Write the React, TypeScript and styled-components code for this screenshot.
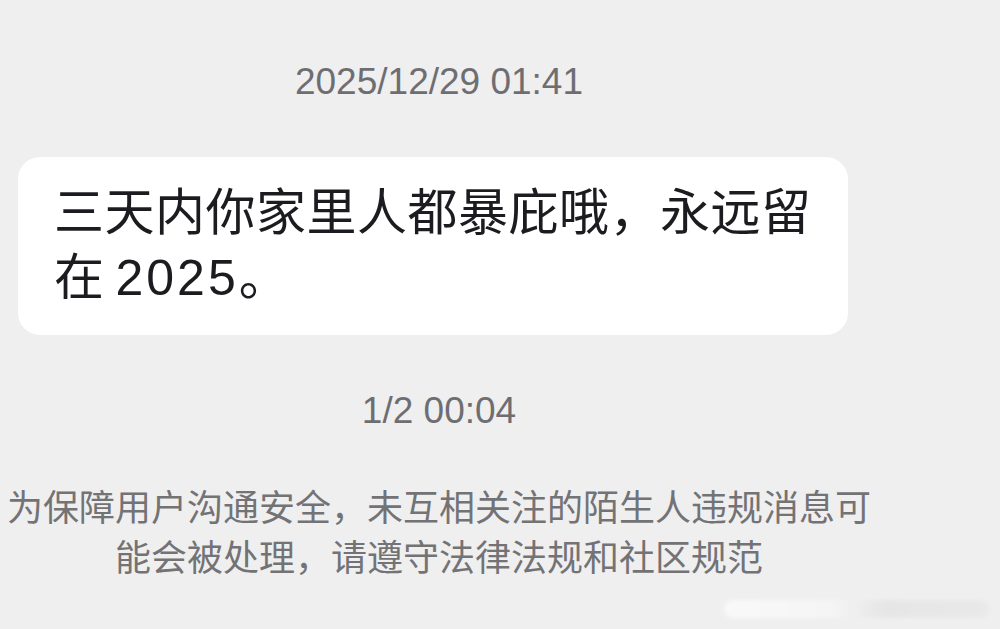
import React from 'react';
import styled, { createGlobalStyle } from 'styled-components';

const GlobalStyle = createGlobalStyle`
    html, body {
        margin: 0;
        padding: 0;
        background: #efefef;
    }
    body {
        font-family: "Liberation Sans", "Noto Sans CJK SC", sans-serif;
    }
`;

const Page = styled.div`
    position: relative;
    width: 1000px;
    height: 629px;
    overflow: hidden;
    background: #efefef;
`;

const Column = styled.div`
    width: 878px;
    padding-top: 60px;
    display: flex;
    flex-direction: column;
    align-items: center;
`;

const Timestamp = styled.div<{ $gap: number }>`
    font-family: "Liberation Sans", "Noto Sans CJK SC", sans-serif;
    font-size: 37px;
    line-height: 44px;
    color: #6e6e72;
    margin-bottom: ${({ $gap }) => $gap}px;
`;

const Bubble = styled.div`
    align-self: flex-start;
    margin-left: 18px;
    width: 830px;
    box-sizing: border-box;
    padding: 19px 30px 29px 36px;
    background: #ffffff;
    border-radius: 22px;
    font-family: "Noto Sans CJK SC", "Liberation Sans", sans-serif;
    font-size: 50px;
    line-height: 65px;
    letter-spacing: 0.5px;
    color: #1c1c20;
    margin-bottom: 54px;
`;

// latin run inside CJK text, a bit wider like the phone font
const Latin = styled.span`
    font-family: "Liberation Sans", sans-serif;
    line-height: 1;
    letter-spacing: 3px;
    margin-left: 11px;
`;

const Notice = styled.p`
    margin: -4px 0 0;
    text-align: center;
    font-family: "Noto Sans CJK SC", sans-serif;
    font-size: 36px;
    line-height: 50px;
    color: #737376;
`;

const Watermark = styled.div`
    position: absolute;
    left: 724px;
    top: 600px;
    width: 266px;
    height: 18px;
    border-radius: 9px;
    background: linear-gradient(90deg, #fafafa 0%, #f6f6f6 40%, #e6e6e6 60%, #e9e9e9 100%);
    filter: blur(2px);
    opacity: 0.9;
`;

export default function App() {
    return (
        <>
            <GlobalStyle />
            <Page>
                <Column>
                    <Timestamp $gap={53}>2025/12/29 01:41</Timestamp>
                    <Bubble>
                        三天内你家里人都暴庇哦，永远留
                        <br />
                        在<Latin>2025</Latin>。
                    </Bubble>
                    <Timestamp $gap={51}>1/2 00:04</Timestamp>
                    <Notice>
                        为保障用户沟通安全，未互相关注的陌生人违规消息可
                        <br />
                        能会被处理，请遵守法律法规和社区规范
                    </Notice>
                </Column>
                <Watermark />
            </Page>
        </>
    );
}
